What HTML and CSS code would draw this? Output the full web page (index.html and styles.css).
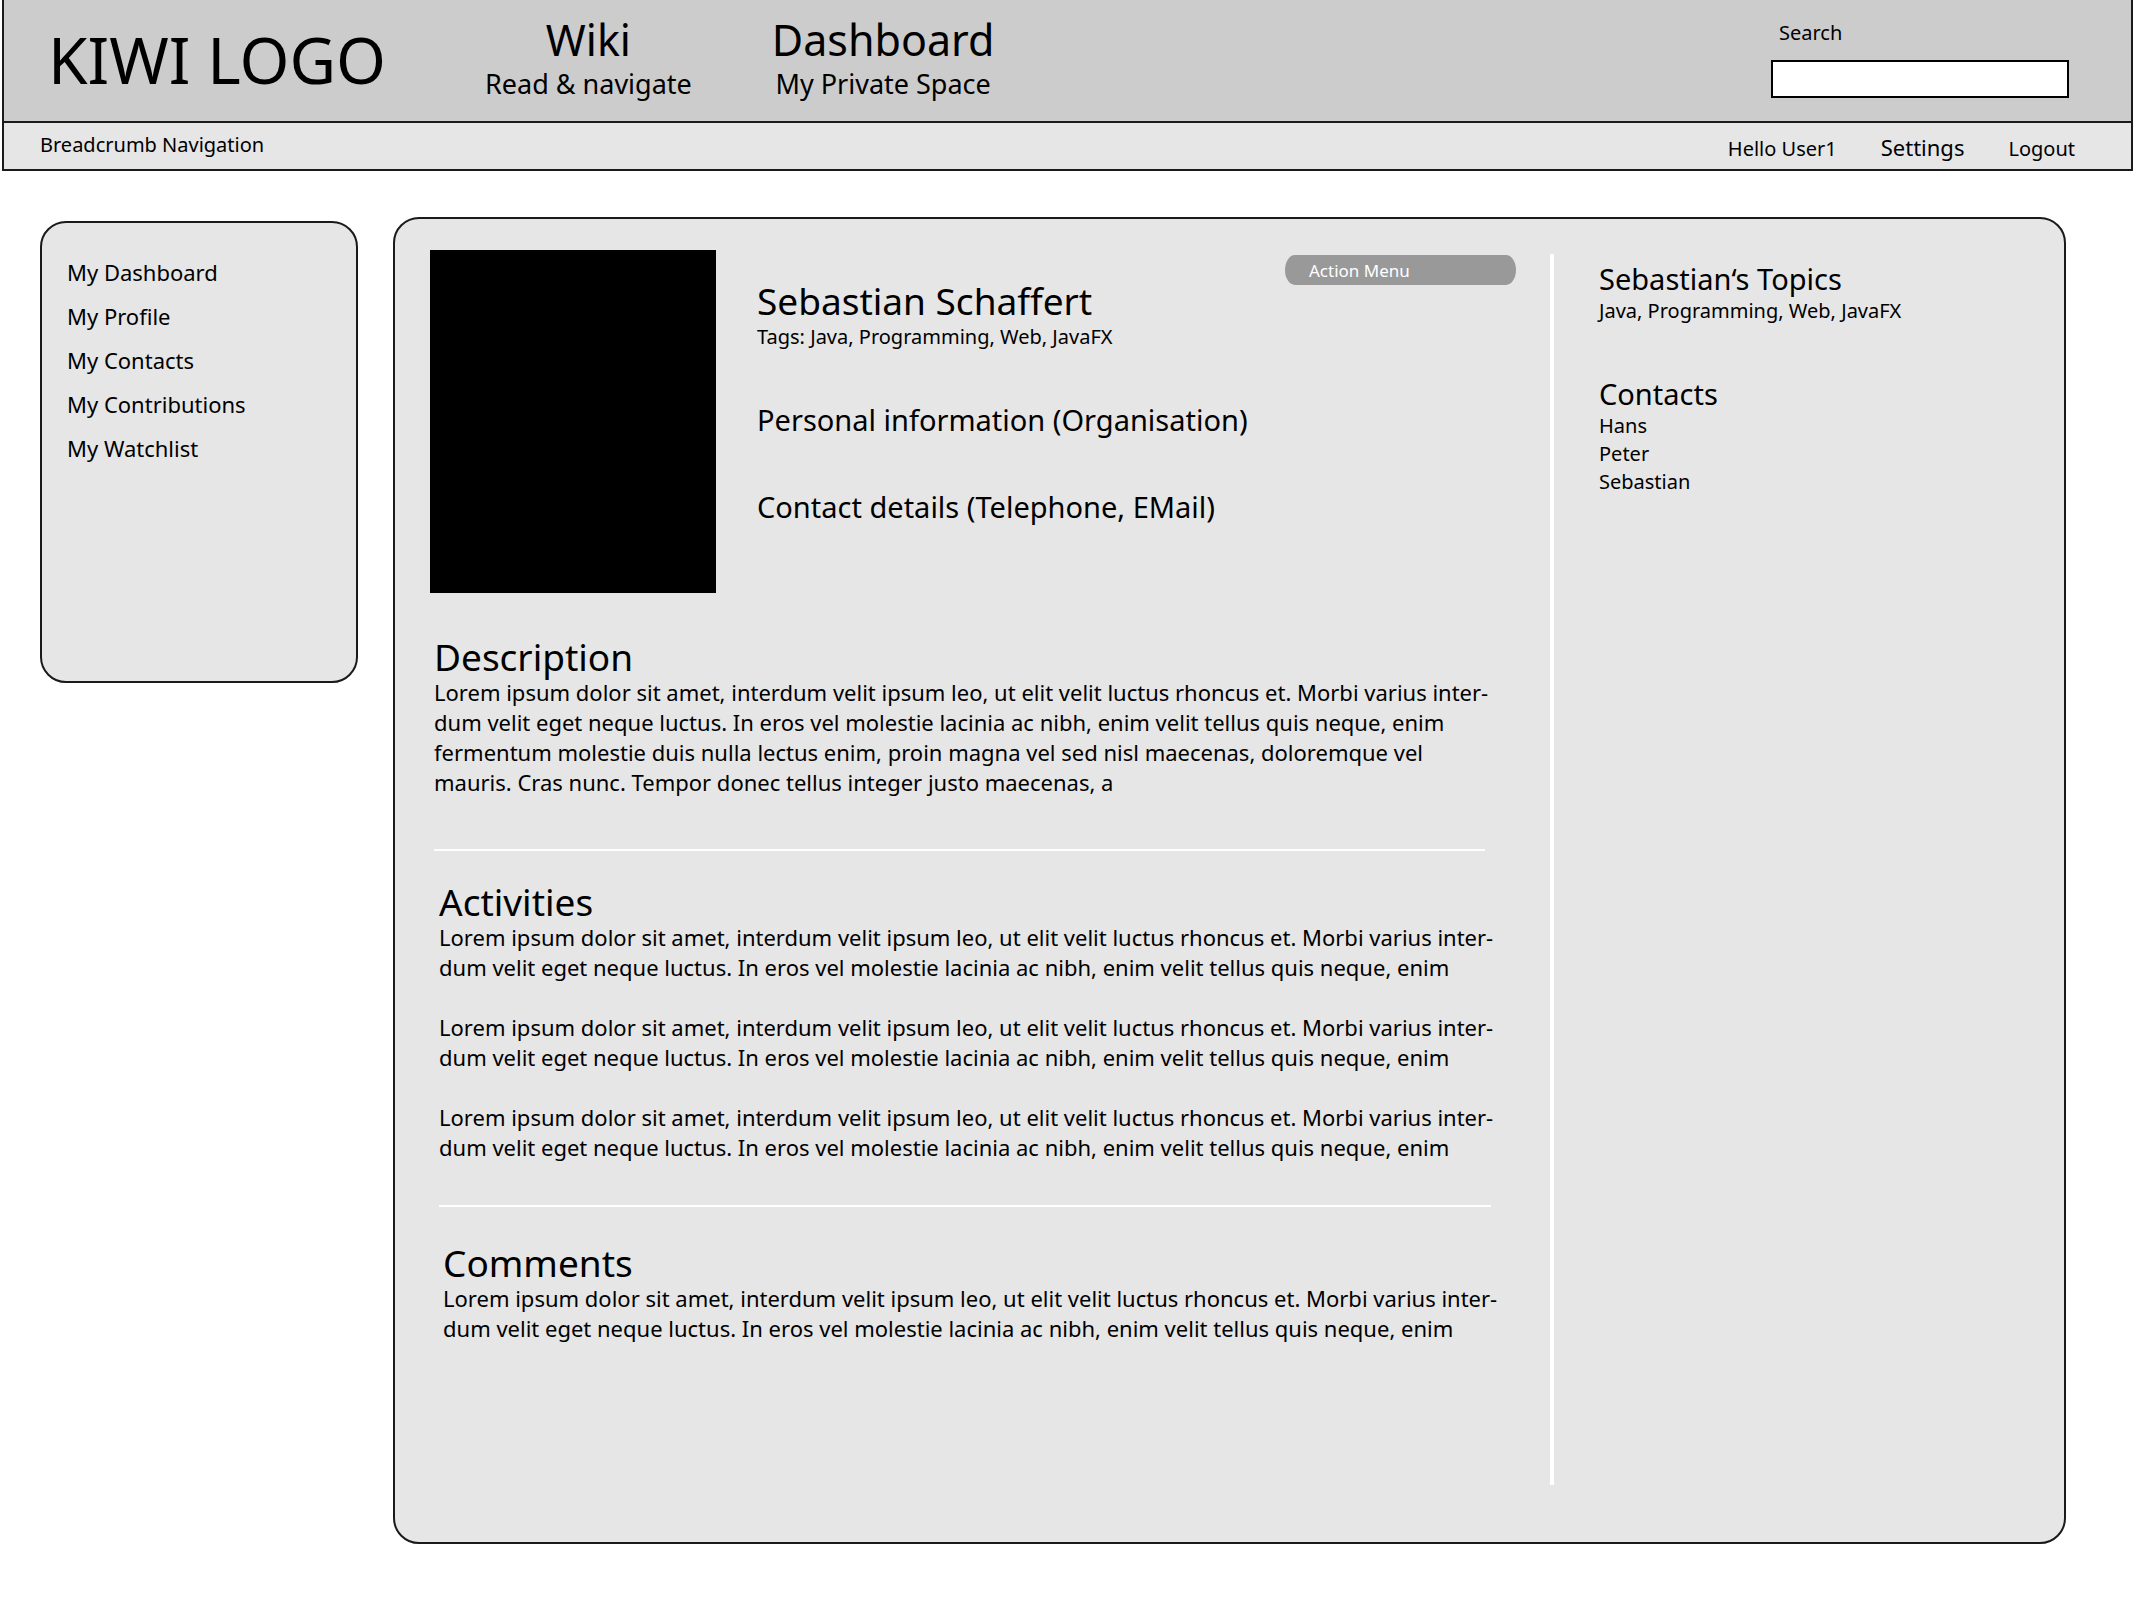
FILE: index.html
```
<!DOCTYPE html>
<html lang="en">
<head>
<meta charset="utf-8">
<title>KiWi – Sebastian Schaffert</title>
<link rel="stylesheet" href="styles.css">
</head>
<body>
<header class="header">
  <div class="topbar">
    <a class="logo" href="#">KIWI LOGO</a>
    <nav class="spaces" aria-label="Spaces">
      <a class="space" href="#"><span class="space-name">Wiki</span><span class="space-note">Read &amp; navigate</span></a>
      <a class="space" href="#"><span class="space-name">Dashboard</span><span class="space-note">My Private Space</span></a>
    </nav>
    <form class="search">
      <label class="search-label" for="search">Search</label>
      <input class="search-input" id="search" type="search">
    </form>
  </div>
  <div class="subbar">
    <div class="breadcrumb">Breadcrumb Navigation</div>
    <div class="user">
      <span>Hello User1</span>
      <a class="settings" href="#">Settings</a>
      <a href="#">Logout</a>
    </div>
  </div>
</header>

<div class="page">
  <nav class="sidebar" aria-label="Dashboard">
    <ul class="menu">
      <li><a href="#">My Dashboard</a></li>
      <li><a href="#">My Profile</a></li>
      <li><a href="#">My Contacts</a></li>
      <li><a href="#">My Contributions</a></li>
      <li><a href="#">My Watchlist</a></li>
    </ul>
  </nav>

  <div class="panel">
    <main class="content">
      <div class="profile">
        <div class="photo" role="img" aria-label="Portrait"></div>
        <div class="facts">
          <div class="identity">
            <h1 class="title">Sebastian Schaffert</h1>
            <p class="small">Tags: Java, Programming, Web, JavaFX</p>
          </div>
          <p class="fact">Personal information (Organisation)</p>
          <p class="fact">Contact details (Telephone, EMail)</p>
        </div>
        <button class="action-menu" type="button">Action Menu</button>
      </div>

      <section class="description">
        <h2 class="title">Description</h2>
        <p>Lorem ipsum dolor sit amet, interdum velit ipsum leo, ut elit velit luctus rhoncus et. Morbi varius inter-<br>dum velit eget neque luctus. In eros vel molestie lacinia ac nibh, enim velit tellus quis neque, enim<br>fermentum molestie duis nulla lectus enim, proin magna vel sed nisl maecenas, doloremque vel<br>mauris. Cras nunc. Tempor donec tellus integer justo maecenas, a</p>
        <hr class="rule">
      </section>

      <section class="activities">
        <h2 class="title">Activities</h2>
        <div class="entries">
          <p>Lorem ipsum dolor sit amet, interdum velit ipsum leo, ut elit velit luctus rhoncus et. Morbi varius inter-<br>dum velit eget neque luctus. In eros vel molestie lacinia ac nibh, enim velit tellus quis neque, enim</p>
          <p>Lorem ipsum dolor sit amet, interdum velit ipsum leo, ut elit velit luctus rhoncus et. Morbi varius inter-<br>dum velit eget neque luctus. In eros vel molestie lacinia ac nibh, enim velit tellus quis neque, enim</p>
          <p>Lorem ipsum dolor sit amet, interdum velit ipsum leo, ut elit velit luctus rhoncus et. Morbi varius inter-<br>dum velit eget neque luctus. In eros vel molestie lacinia ac nibh, enim velit tellus quis neque, enim</p>
        </div>
        <hr class="rule">
      </section>

      <section class="comments">
        <h2 class="title">Comments</h2>
        <p>Lorem ipsum dolor sit amet, interdum velit ipsum leo, ut elit velit luctus rhoncus et. Morbi varius inter-<br>dum velit eget neque luctus. In eros vel molestie lacinia ac nibh, enim velit tellus quis neque, enim</p>
      </section>
    </main>

    <aside class="aside">
      <section>
        <h2 class="subtitle">Sebastian‘s Topics</h2>
        <p class="small">Java, Programming, Web, JavaFX</p>
      </section>
      <section>
        <h2 class="subtitle">Contacts</h2>
        <ul class="small">
          <li><a href="#">Hans</a></li>
          <li><a href="#">Peter</a></li>
          <li><a href="#">Sebastian</a></li>
        </ul>
      </section>
    </aside>
  </div>
</div>
</body>
</html>
```
FILE: styles.css
```
:root {
  --line: #1a1a1a;
  --bar: #ccc;
  --surface: #e6e6e6;
}

* { box-sizing: border-box; }

body {
  margin: 0;
  background: #fff;
  color: #000;
  font: 22px/30px "Noto Sans", sans-serif;
}

h1, h2, p, ul {
  margin: 0;
  padding: 0;
  font-weight: 400;
}

ul { list-style: none; }

a {
  color: inherit;
  text-decoration: none;
}

/* Header */
.header {
  margin-left: 2px;
  border: 2px solid var(--line);
  border-top: 0;
}

.topbar {
  display: flex;
  align-items: flex-start;
  height: 123px;
  padding: 14px 62px 0 44px;
  background: var(--bar);
  border-bottom: 2px solid var(--line);
}

.logo {
  padding-top: 6px;
  font-size: 64px;
  line-height: 80px;
}

.spaces {
  display: flex;
  gap: 80px;
  margin-left: 99px;
}

.space {
  display: flex;
  flex-direction: column;
  align-items: center;
}

.space-name {
  font-size: 43px;
  line-height: 52px;
}

.space-note {
  font-size: 27px;
  line-height: 36px;
}

.search {
  display: flex;
  flex-direction: column;
  gap: 13px;
  width: 298px;
  margin-left: auto;
  padding-top: 5px;
}

.search-label {
  padding-left: 8px;
  font-size: 20px;
  line-height: 28px;
}

.search-input {
  height: 38px;
  margin: 0;
  padding: 0 8px;
  border: 2px solid #000;
  border-radius: 0;
  background: #fff;
  font: inherit;
  appearance: none;
}

.subbar {
  display: flex;
  justify-content: space-between;
  height: 46px;
  padding: 8px 56px 0 36px;
  background: var(--surface);
  font-size: 20px;
  line-height: 28px;
}

.user {
  display: flex;
  align-items: baseline;
  gap: 44px;
  padding-top: 2px;
}

.settings { font-size: 22px; }

/* Page */
.page {
  display: flex;
  align-items: flex-start;
  gap: 35px;
  padding: 46px 67px 46px 40px;
}

.sidebar,
.panel {
  border: 2px solid var(--line);
  border-radius: 26px;
  background: var(--surface);
}

.sidebar {
  flex: none;
  width: 318px;
  min-height: 462px;
  margin-top: 4px;
  padding: 27px 25px;
}

.menu { line-height: 44px; }

.panel {
  flex: 1;
  display: grid;
  grid-template-columns: minmax(0, 1fr) 514px;
  min-height: 1327px;
  padding: 35px 0 57px;
}

.content {
  margin-top: -4px;
}

/* Profile */
.profile {
  display: flex;
  align-items: flex-start;
  padding: 0 34px 0 35px;
}

.photo {
  flex: none;
  width: 286px;
  height: 343px;
  background: #000;
}

.facts {
  display: flex;
  flex-direction: column;
  gap: 51px;
  padding: 31px 0 0 41px;
}

.identity {
  display: grid;
  gap: 2px;
}

.title {
  font-size: 37px;
  line-height: 40px;
}

.fact,
.subtitle {
  font-size: 29px;
  line-height: 36px;
}

.small {
  font-size: 20px;
  line-height: 28px;
}

.action-menu {
  width: 231px;
  height: 30px;
  margin: 5px 0 0 auto;
  padding: 2px 24px 0;
  border: 0;
  border-radius: 10px / 15px;
  background: #999;
  color: #fff;
  font: 17px/28px "Noto Sans", sans-serif;
  text-align: left;
}

/* Sections step slightly to the right down the page */
.description { padding: 44px 0 0 39px; }
.activities { padding: 31px 0 0 44px; }
.comments { padding: 36px 0 0 48px; }

.entries {
  display: grid;
  gap: 30px;
}

.rule {
  height: 2px;
  margin: 52px 65px 0 0;
  border: 0;
  background: #fff;
}

.activities .rule {
  margin-top: 43px;
  margin-right: 59px;
}

/* Right column */
.aside {
  display: flex;
  flex-direction: column;
  gap: 51px;
  padding: 7px 24px 0 45px;
  border-left: 4px solid #fff;
}
```
